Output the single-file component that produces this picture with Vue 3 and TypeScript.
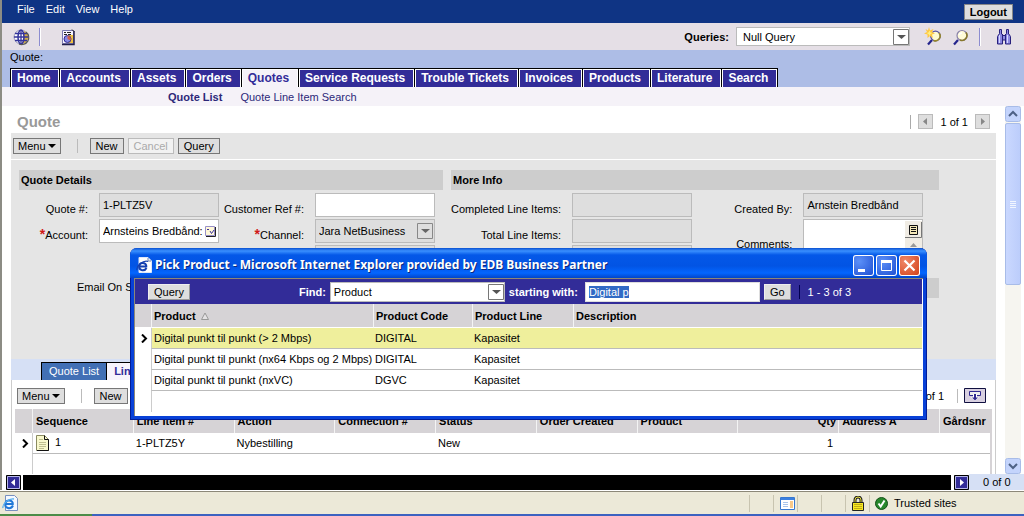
<script setup lang="ts">
import { onMounted, ref } from 'vue'

interface LineItem {
  sequence: string
  item: string
  action: string
  status: string
  qty: string
}

interface Product {
  name: string
  code: string
  line: string
}

const menus: string[] = ['File', 'Edit', 'View', 'Help']
const screens: string[] = [
  'Home', 'Accounts', 'Assets', 'Orders', 'Quotes', 'Service Requests',
  'Trouble Tickets', 'Invoices', 'Products', 'Literature', 'Search',
]
const activeScreen = ref('Quotes')

const products: Product[] = [
  { name: 'Digital punkt til punkt (> 2 Mbps)', code: 'DIGITAL', line: 'Kapasitet' },
  { name: 'Digital punkt til punkt (nx64 Kbps og 2 Mbps)', code: 'DIGITAL', line: 'Kapasitet' },
  { name: 'Digital punkt til punkt (nxVC)', code: 'DGVC', line: 'Kapasitet' },
]
const picked = ref(0)

const lineItems: LineItem[] = [
  { sequence: '1', item: '1-PLTZ5Y', action: 'Nybestilling', status: 'New', qty: '1' },
]

const term = ref('Digital p')
const termBox = ref<HTMLInputElement | null>(null)

onMounted(() => {
  termBox.value?.focus()
  termBox.value?.select()
})
</script>

<template>
  <div class="app">
    <div class="window">
      <header class="menubar">
        <nav class="menus">
          <a v-for="m in menus" :key="m" href="#">{{ m }}</a>
        </nav>
        <button class="logout" type="button">Logout</button>
      </header>

      <div class="toolbar">
        <button class="icon" type="button" aria-label="Site map">
          <svg width="18" height="18" viewBox="0 0 18 18">
            <circle cx="9" cy="9" r="7" fill="#fff" stroke="#9a98b8" />
            <path d="M12 3a7 7 0 0 1 1 12l-4 1 2-3z" fill="#d8b040" />
            <ellipse cx="9" cy="9" rx="3" ry="7" fill="none" stroke="#34349c" stroke-width="1.5" />
            <path d="M9 2v14M2 9h14M3 5.5h12M3 12.500h12" stroke="#34349c" stroke-width="1.300" />
            <path d="M14 4a7 7 0 0 1-7 12" fill="none" stroke="#555" stroke-width="1.200" />
          </svg>
        </button>
        <span class="bar"></span>
        <button class="icon report" type="button" aria-label="Reports">
          <svg width="16" height="18" viewBox="0 0 16 18">
            <path d="M2.500 2.500h11v13h-11z" fill="#f8f4ff" stroke="#7a78b0" />
            <path d="M9 7h4v8H8z" fill="#f0c040" />
            <path d="M14 3v13.500H2" fill="none" stroke="#24204c" stroke-width="1.500" />
            <path d="M4 4.500h2M7 4.500h4M4 6.500h3M8 6.500h3" stroke="#222" />
            <path d="M12 1.500l2 2" stroke="#222" />
            <circle cx="7.500" cy="11" r="3.500" fill="#8888e4" stroke="#2c2890" />
            <path d="M7.500 11V7.500a3.500 3.500 0 0 1 3 5z" fill="#d06048" />
          </svg>
        </button>
        <label class="queries" for="query">Queries:</label>
        <span class="pick query-pick">
          <select id="query"><option>Null Query</option></select>
          <svg class="arrow" width="16" height="16" viewBox="0 0 16 16"><path d="M.5.5h15v15H.5z" fill="#fff" stroke="#777" /><path d="M4 6h9l-4.500 4z" fill="#555" /></svg>
        </span>
        <button class="icon" type="button" aria-label="New query">
          <svg width="20" height="20" viewBox="0 0 20 20">
            <path d="M4 17.500l4-4.500" stroke="#24248c" stroke-width="2.200" />
            <circle cx="11.500" cy="9" r="4.800" fill="#fffbd0" stroke="#5850a0" stroke-width="1.300" />
            <path d="M15 6a4.800 4.800 0 0 1-5.500 7.500" fill="none" stroke="#98882c" stroke-width="1.600" />
            <path d="M5 0l1 3.500L9.500 2 8 5l3 1.500-3 1L9 11 6 9l-2.500 2 0-3.500L0 6.500 3 5 1.500 2 4 3.500z" fill="#ffc840" />
            <path d="M5.500 3.500l1 2 2 .5-2 1-1 2-1-2-2-1 2-.5z" fill="#fff080" />
          </svg>
        </button>
        <button class="icon" type="button" aria-label="Execute query">
          <svg width="20" height="20" viewBox="0 0 20 20">
            <path d="M3 17.500l4-4.500" stroke="#24248c" stroke-width="2.200" />
            <circle cx="11" cy="8.500" r="5" fill="#fffbd8" stroke="#8880a8" stroke-width="1.200" />
            <path d="M15 5.500a5 5 0 0 1-6 7.500" fill="none" stroke="#88782c" stroke-width="1.600" />
            <path d="M8 8a3 3 0 0 1 3-2" fill="none" stroke="#fff" stroke-width="1.500" />
          </svg>
        </button>
        <span class="bar right"></span>
        <button class="icon" type="button" aria-label="Search center">
          <svg width="16" height="18" viewBox="0 0 16 18">
            <path d="M3.500 1.500h2v4l1.500 2h2l1.500-2v-4h2v4l2 3v7.500h-5v-4h-3v4h-5V8.500l2-3z" fill="#8c88e0" stroke="#28207c" />
            <path d="M3.500 7v8M11.500 7v8" stroke="#d8d8ff" />
            <path d="M6.500 6v10M9.500 6v10M5.500 2v4M12.500 2v4" stroke="#28207c" />
          </svg>
        </button>
      </div>

      <div class="screenbar">
        <div class="crumb">Quote:</div>
        <nav class="screens">
          <a v-for="s in screens" :key="s" href="#" :class="{ active: s === activeScreen }" @click.prevent="activeScreen = s">{{ s }}</a>
        </nav>
      </div>

      <nav class="views">
        <a class="current" href="#">Quote List</a>
        <a href="#">Quote Line Item Search</a>
      </nav>

      <div class="workspace">
        <main class="page">
          <div class="titlebar">
            <h1>Quote</h1>
            <div class="pager">
              <span class="rule"></span>
              <button type="button" class="step" aria-label="Previous record"><svg width="15" height="15" viewBox="0 0 15 15"><path d="M9 4v7L5 7.500z" fill="#888" /></svg></button>
              <span>1 of 1</span>
              <button type="button" class="step" aria-label="Next record"><svg width="15" height="15" viewBox="0 0 15 15"><path d="M6 4v7l4-3.500z" fill="#888" /></svg></button>
            </div>
          </div>

          <div class="actions">
            <button class="btn menu" type="button">Menu <svg width="8" height="4" viewBox="0 0 8 4"><path d="M0 0h8L4 4z" /></svg></button>
            <span class="rule"></span>
            <button class="btn" type="button">New</button>
            <button class="btn" type="button" disabled>Cancel</button>
            <button class="btn" type="button">Query</button>
          </div>

          <form class="form" @submit.prevent>
            <section class="details">
              <h2>Quote Details</h2>
              <div class="fields">
                <label for="quote-no">Quote #:</label>
                <input id="quote-no" readonly value="1-PLTZ5V">
                <label for="customer-ref">Customer Ref #:</label>
                <input id="customer-ref" value="">
                <label for="account"><b>*</b>Account:</label>
                <span class="pick">
                  <input id="account" value="Arnsteins Bredbånd:">
                  <svg class="chooser" width="11" height="11" viewBox="0 0 11 11"><path d="M.5.5h9v9h-9z" fill="#fff8d8" stroke="#9890c8" /><path d="M10.500 1v9.500H1" fill="none" stroke="#222" /><path d="M2 3.500h2M5 5l1.500 2.500L9 4" fill="none" stroke="#38309c" /></svg>
                </span>
                <label for="channel"><b>*</b>Channel:</label>
                <span class="pick dim">
                  <select id="channel"><option>Jara NetBusiness</option></select>
                  <svg class="arrow" width="16" height="16" viewBox="0 0 16 16"><path d="M.5.5h15v15H.5z" fill="#dedede" stroke="#888" /><path d="M4 6h9l-4.500 4z" fill="#666" /></svg>
                </span>
                <input class="third" readonly aria-label="Channel reference" value="">
                <label class="email" for="email-status">Email On Status:</label>
                <input id="email-status" type="checkbox">
              </div>
            </section>
            <section class="more">
              <h2>More Info</h2>
              <div class="fields">
                <label for="completed">Completed Line Items:</label>
                <input id="completed" readonly value="">
                <label for="created-by">Created By:</label>
                <input id="created-by" readonly value="Arnstein Bredbånd">
                <label for="total">Total Line Items:</label>
                <input id="total" readonly value="">
                <label class="tall" for="comments">Comments:</label>
                <span class="pick tall">
                  <textarea id="comments"></textarea>
                  <svg class="memo" width="17" height="34" viewBox="0 0 17 34">
                    <path d="M0 0h17v34H0z" fill="#f0ece4" /><path d="M16.500 1v15.500H0" fill="none" stroke="#777" />
                    <path d="M4.500 4.500h8v9h-8z" fill="#f5e8b8" stroke="#111" /><path d="M6 6.500h5M6 8.500h5M6 10.500h5" stroke="#111" />
                    <path d="M5 26l3.500-4 3.500 4z" fill="#999" />
                  </svg>
                </span>
                <input class="second" readonly aria-label="Open line items" value="">
              </div>
              <h2 class="lower"></h2>
            </section>
          </form>

          <nav class="subtabs">
            <a class="on" href="#">Quote List</a>
            <a href="#">Line Items</a>
          </nav>

          <div class="list">
            <div class="actions list-actions">
              <button class="btn menu" type="button">Menu <svg width="8" height="4" viewBox="0 0 8 4"><path d="M0 0h8L4 4z" /></svg></button>
              <span class="rule"></span>
              <button class="btn" type="button">New</button>
              <span class="count">1 - 1 of 1</span>
              <span class="rule"></span>
              <button class="toggle" type="button" aria-label="Show more">
                <svg width="22" height="15" viewBox="0 0 22 15"><path d="M.5.5h21v14H.5z" fill="#d8d0e0" stroke="#101040" /><path d="M5.500 3.500h11v4h-11z" fill="#eee" stroke="#302890" /><path d="M9 6h4v3h2l-4 4-4-4h2z" fill="#fff" /><path d="M8 9.500h6l-3 3z" fill="#302890" /><path d="M11 6v4" stroke="#302890" stroke-width="2" /></svg>
              </button>
            </div>
            <table class="items">
              <colgroup>
                <col class="c-mark"><col v-for="n in 9" :key="n" class="c-wide"><col class="c-last">
              </colgroup>
              <thead>
                <tr>
                  <th></th><th>Sequence</th><th>Line Item #</th><th>Action</th><th>Connection #</th><th>Status</th>
                  <th>Order Created</th><th>Product</th><th class="num">Qty</th><th>Address A</th><th>Gårdsnr</th>
                </tr>
              </thead>
              <tbody>
                <tr v-for="row in lineItems" :key="row.item">
                  <td class="mark"><svg width="7" height="9" viewBox="0 0 7 9"><path d="M1 .5l4 4-4 4" fill="none" stroke="#000" stroke-width="2" /></svg></td>
                  <td class="seq">
                    <svg width="13" height="16" viewBox="0 0 13 16"><path d="M.5.5h8l4 4v11H.5z" fill="#f8f8cc" stroke="#8a8a60" /><path d="M8.500.5v4h4v11H1" fill="none" stroke="#111" /><path d="M3 4.500h4M3 7.500h7M3 9.500h7M3 11.500h7M3 13.500h5" stroke="#c0c090" /></svg>
                    <span>{{ row.sequence }}</span>
                  </td>
                  <td>{{ row.item }}</td><td>{{ row.action }}</td><td></td><td>{{ row.status }}</td>
                  <td></td><td></td><td class="num">{{ row.qty }}</td><td></td><td></td>
                </tr>
                <tr><td v-for="n in 11" :key="n"></td></tr>
              </tbody>
            </table>
          </div>
        </main>

        <div class="scroller">
          <svg width="16" height="16" viewBox="0 0 16 16"><rect x=".5" y=".5" width="15" height="15" rx="2" fill="#c4d4fc" stroke="#a8bce8" /><path d="M4 10l4-4 4 4" fill="none" stroke="#4d6185" stroke-width="2" /></svg>
          <div class="thumb"><i></i><i></i><i></i><i></i></div>
          <svg width="16" height="16" viewBox="0 0 16 16"><rect x=".5" y=".5" width="15" height="15" rx="2" fill="#c4d4fc" stroke="#a8bce8" /><path d="M4 6l4 4 4-4" fill="none" stroke="#4d6185" stroke-width="2" /></svg>
        </div>
      </div>

      <div class="hscroll">
        <button type="button" aria-label="Scroll left"><svg width="15" height="15" viewBox="0 0 15 15"><path d="M.5.5h14v14H.5z" fill="#322c98" stroke="#000" /><path d="M1.500 1.500h12v12h-12z" fill="none" stroke="#b8b8e8" /><path d="M9 4v7L5 7.500z" fill="#fff" /></svg></button>
        <div class="track"></div>
        <button type="button" aria-label="Scroll right"><svg width="15" height="15" viewBox="0 0 15 15"><path d="M.5.5h14v14H.5z" fill="#322c98" stroke="#000" /><path d="M1.500 1.500h12v12h-12z" fill="none" stroke="#b8b8e8" /><path d="M6 4v7l4-3.500z" fill="#fff" /></svg></button>
        <span class="total">0 of 0</span>
      </div>
    </div>

    <footer class="status">
      <div class="page-icon">
        <svg width="16" height="16" viewBox="0 0 16 16"><path d="M3.500.5h9l3 3v12h-12z" fill="#f4f8ff" stroke="#7890c0" /><path d="M11 10.500c-1 2-3 3-5 2.500-4-1-3.500-7 .5-7.500 3-.3 4.500 1.500 4.300 3.500H4" fill="none" stroke="#2078d8" stroke-width="2" /><path d="M1 13C0 9 7 3 12 4" fill="none" stroke="#58b0f0" stroke-width="1.300" /></svg>
      </div>
      <div class="cell"></div>
      <div class="cell"><svg width="15" height="13" viewBox="0 0 15 13"><path d="M.5.5h14v12H.5z" fill="#fff" stroke="#3878d0" /><path d="M1 1h13v2H1z" fill="#3c80e0" /><path d="M3 5.500h5M3 7.500h5M3 9.500h5" stroke="#a8c4ec" /><path d="M10 4h3v7h-3z" fill="#f8c888" /></svg></div>
      <div class="cell"></div>
      <div class="cell"></div>
      <div class="cell"><svg width="12" height="15" viewBox="0 0 12 15"><path d="M3 7V4a3 3 0 0 1 6 0v3" fill="none" stroke="#222" stroke-width="3" /><path d="M3 7V4a3 3 0 0 1 6 0v3" fill="none" stroke="#e8e040" /><path d="M.5 6.500h11v8H.5z" fill="#f8e820" stroke="#222" /><path d="M2 8.500h8M2 10.500h8M2 12.500h8" stroke="#c0ac18" /></svg></div>
      <div class="cell zone">
        <svg width="13" height="13" viewBox="0 0 13 13"><circle cx="6.500" cy="6.500" r="6" fill="#28882c" stroke="#145018" /><path d="M3.500 6.500l2.200 3L9.500 3.500" fill="none" stroke="#fff" stroke-width="2" /></svg>
        <span>Trusted sites</span>
      </div>
    </footer>
    <div class="taskbar"></div>

    <div class="popup" role="dialog" aria-labelledby="popup-title">
      <div class="caption">
        <svg width="16" height="16" viewBox="0 0 16 16"><path d="M3 .5h9l3.500 3.500v11.500H3z" fill="#fff" stroke="#e0e8f8" /><path d="M12 1v3h3" fill="none" stroke="#6880b0" /><path d="M10.500 11c-1 2-3 2.500-5 2-3.500-1-3-7 1-7 2.500 0 4 1.500 3.800 3.500H4" fill="none" stroke="#1440b0" stroke-width="2" /><path d="M1 13C0 9 7 3 12 4.500" fill="none" stroke="#1440b0" stroke-width="1.200" /></svg>
        <span id="popup-title">Pick Product - Microsoft Internet Explorer provided by EDB Business Partner</span>
        <button type="button" aria-label="Minimize"><svg width="21" height="21" viewBox="0 0 21 21"><path d="M5 14h7v3H5z" fill="#fff" /></svg></button>
        <button type="button" aria-label="Maximize"><svg width="21" height="21" viewBox="0 0 21 21"><path d="M5.500 5.500h10v10h-10z" fill="none" stroke="#fff" /><path d="M5 5h11v3H5z" fill="#fff" /></svg></button>
        <button class="close" type="button" aria-label="Close"><svg width="21" height="21" viewBox="0 0 21 21"><path d="M5.500 5.500l10 10M15.500 5.500l-10 10" stroke="#fff" stroke-width="2.200" /></svg></button>
      </div>
      <div class="body">
        <div class="finder">
          <button class="btn" type="button">Query</button>
          <label class="find" for="find">Find:</label>
          <span class="pick find-pick">
            <select id="find"><option>Product</option></select>
            <svg class="arrow" width="16" height="16" viewBox="0 0 16 16"><path d="M.5.5h15v15H.5z" fill="#fff" stroke="#777" /><path d="M4 6h9l-4.500 4z" fill="#555" /></svg>
          </span>
          <label for="term">starting with:</label>
          <input id="term" ref="termBox" v-model="term">
          <button class="btn go" type="button">Go</button>
          <span class="rule"></span>
          <span class="range">1 - 3 of 3</span>
        </div>
        <table class="results">
          <colgroup><col class="p-mark"><col class="p-name"><col class="p-code"><col class="p-line"><col></colgroup>
          <thead>
            <tr>
              <th></th>
              <th>Product <svg width="8" height="8" viewBox="0 0 8 8"><path d="M.5 7.500L4 1l3.500 6.500z" fill="#e4e2e4" stroke="#999" /></svg></th>
              <th>Product Code</th><th>Product Line</th><th>Description</th>
            </tr>
          </thead>
          <tbody>
            <tr v-for="(p, i) in products" :key="p.name" :class="{ picked: i === picked }" @click="picked = i">
              <td class="mark"><svg v-if="i === picked" width="7" height="9" viewBox="0 0 7 9"><path d="M1 .5l4 4-4 4" fill="none" stroke="#000" stroke-width="2" /></svg></td>
              <td>{{ p.name }}</td><td>{{ p.code }}</td><td>{{ p.line }}</td><td></td>
            </tr>
            <tr class="blank"><td v-for="n in 5" :key="n"></td></tr>
          </tbody>
        </table>
      </div>
    </div>
  </div>
</template>

<style>
html, body { margin: 0; background: #fff; overflow: hidden; }
</style>

<style scoped>
* { box-sizing: border-box; }
.app {
  position: relative;
  height: 100vh;
  display: flex;
  flex-direction: column;
  overflow: hidden;
  font-family: "Liberation Sans", Arial, sans-serif;
  font-size: 11px;
  line-height: 14px;
  color: #000;
}
button, input, select, textarea { font: inherit; color: inherit; margin: 0; border-radius: 0; }
button { padding: 0; border: 0; background: none; }
a { color: inherit; text-decoration: none; white-space: nowrap; }
svg { display: block; flex: none; }
.window { flex: 1; min-height: 0; display: flex; flex-direction: column; border-left: 2px solid #8c8c84; }

.menubar { height: 23px; flex: none; background: #0f3484; color: #fff; display: flex; justify-content: space-between; align-items: center; padding: 0 10px 0 15px; }
.menus { display: flex; gap: 11px; padding-bottom: 5px; }
.logout { height: 16px; margin-right: 1px; padding: 0 5px; background: #dedede; border: 1px solid #888; color: #000; font-weight: bold; line-height: 14px; }

.toolbar { height: 27px; flex: none; background: #e5dfe6; display: flex; align-items: center; padding: 0 12px 0 10px; }
.bar { width: 2px; height: 18px; margin-left: 9px; background: #8c8cd0; border-right: 1px solid #fff; }
.bar.right { margin: 0 15px 0 8px; }
.report { margin-left: 19px; }
.queries { margin-left: auto; font-weight: bold; }
.query-pick { width: 174px; height: 19px; margin: 0 14px 0 7px; }
.icon + .icon { margin-left: 7px; }

.pick { position: relative; display: flex; min-width: 0; }
.pick > select, .pick > input, .pick > textarea { width: 100%; height: 100%; }
select { appearance: none; background: #fff; border: 1px solid #bbb; padding: 0 20px 0 6px; }
.arrow { position: absolute; right: 1px; top: 50%; margin-top: -8px; pointer-events: none; }

.screenbar { height: 37px; flex: none; background: #adbde6; display: flex; flex-direction: column; justify-content: space-between; padding-left: 8px; }
.crumb { line-height: 15px; }
.screens { display: flex; }
.screens a { height: 19px; padding: 0 9px 0 6px; border-top: 1px solid #000; border-left: 1px solid #000; background: #322c98; color: #fff; font-weight: bold; font-size: 12px; line-height: 18px; box-shadow: inset 1px 1px #fff, inset -1px 0 #fff; }
.screens a:last-child { border-right: 1px solid #000; }
.screens a.active { background: #f5f2f8; color: #322c98; }

.views { height: 19px; flex: none; background: #f5f2f8; display: flex; align-items: center; gap: 18px; padding-left: 166px; color: #2c2878; }
.current { font-weight: bold; }

.workspace { flex: 1; min-height: 0; display: flex; }
.page { flex: 1; min-width: 0; margin-left: 9px; display: flex; flex-direction: column; overflow: hidden; }
.titlebar { height: 27px; flex: none; display: flex; align-items: center; justify-content: space-between; padding: 4px 6px 0 6px; }
h1 { margin: 0; font-size: 15px; line-height: 18px; color: #999; }
.pager { display: flex; align-items: center; gap: 7px; }
.rule { width: 1px; height: 14px; background: #aaa; flex: none; }
.step { width: 15px; height: 15px; background: #dedede; outline: 1px solid #bbb; outline-offset: -1px; }
.actions { height: 27px; flex: none; display: flex; align-items: center; gap: 4px; padding-left: 2px; background: #e5e5e5; border-bottom: 1px solid #fff; }
.actions .rule { margin: 0 8px 0 12px; background: #bbb; }
.btn { height: 16px; padding: 0 5px; display: flex; align-items: center; gap: 2px; background: #dedede; border: 1px solid #777; white-space: nowrap; }
.btn.menu { padding: 0 4px; }
.btn:disabled { color: #aaa; border-color: #bbb; background: #f2f2f2; }

.form { height: 199px; flex: none; display: grid; grid-template-columns: minmax(0, 424fr) minmax(0, 488fr); column-gap: 8px; padding: 10px 57px 0 8px; background: #e5e5e5; overflow: hidden; }
h2 { height: 20px; margin: 0 0 3px; padding-left: 2px; background: #cdcdcd; font-size: 11px; line-height: 20px; }
h2.lower { margin-top: 9px; }
.fields { display: grid; grid-auto-rows: 24px; row-gap: 2px; }
.details .fields { grid-template-columns: 80fr 120fr 96fr 120fr 8fr; }
.more .fields { grid-template-columns: 120fr 120fr 112fr 120fr 16fr; }
.fields label { padding: 9px 11px 0 0; text-align: right; white-space: nowrap; }
.details label:nth-of-type(odd), .more label:nth-of-type(odd) { grid-column: 1; }
.fields input, .fields textarea { min-width: 0; width: 100%; padding: 0 3px; border: 1px solid #bbb; background: #fff; outline: 0; resize: none; }
.fields input[readonly] { background: #dedede; }
.fields b { color: #d01818; font-size: 14px; line-height: 8px; }
.dim select { background: #dedede; padding-left: 3px; }
.dim .arrow { right: 2px; }
.chooser { position: absolute; right: 3px; top: 7px; }
.third { grid-column: 4; grid-row: 3; }
.details label.email { grid-column: 1 / 3; grid-row: 4; text-align: left; padding-left: 58px; }
#email-status { grid-column: 4; grid-row: 4; width: 13px; height: 13px; }
.tall { grid-row: 2 / 4; }
.more label.tall { grid-column: 3; padding-top: 18px; }
.pick.tall { grid-column: 4; }
.second { grid-column: 2; grid-row: 3; }
.memo { position: absolute; right: 1px; top: 2px; }

.subtabs { height: 21px; flex: none; display: flex; align-items: flex-end; padding-left: 30px; background: #d6e0f5; }
.subtabs a { height: 18px; padding: 0 7px; border-top: 1px solid #000; border-left: 1px solid #000; line-height: 17px; background: #f7f4fc; color: #322c98; font-weight: bold; }
.subtabs a.on { padding: 0 7px 0 7px; background: #4270b5; color: #fff; font-weight: normal; }

.list { flex: 1; min-height: 0; border-left: 1px solid #ccc; border-right: 1px solid #ccc; padding: 2px 3px 0; }
.list-actions { background: #fff; border: 0; }
.count { margin-left: auto; }
.list-actions .count + .rule { margin: 0 2px 0 9px; }
.toggle { margin-right: 6px; }
table { width: 100%; border-collapse: separate; border-spacing: 0; table-layout: fixed; }
th, td { padding: 0 2px 0 3px; text-align: left; white-space: nowrap; overflow: hidden; }
th { height: 24px; background: #d6d3d6; border-left: 1px solid #f4f4f4; }
td { height: 21px; border-bottom: 1px solid #bbb; }
th:first-child { border-left: 0; }
td:first-child { border-bottom: 0; }
td:nth-child(2) { border-left: 1px solid #ccc; }
td.mark { padding: 0 0 0 7px; }
th.num, td.num { text-align: right; }
td.num { padding-right: 5px; }
.items { border-right: 2px solid #d6d3d6; }
.c-mark { width: 17px; }
.c-last { width: 51px; }
.seq svg { display: inline-block; vertical-align: middle; margin-right: 6px; }

.scroller { width: 16px; flex: none; margin: 0 3px 0 9px; display: flex; flex-direction: column; background: #f6f5f0; }
.scroller > svg:last-child { margin-top: auto; }
.thumb { height: 162px; margin-top: 1px; display: flex; flex-direction: column; align-items: center; justify-content: center; gap: 1px; border: 1px solid #a8bce8; border-radius: 2px; background: linear-gradient(90deg, #cad8ff, #bccdfb); }
.thumb i { width: 6px; height: 1px; background: #f2f6ff; }

.hscroll { height: 16px; flex: none; display: flex; align-items: center; padding-left: 4px; }
.track { flex: 1; height: 15px; margin: 0 3px 0 2px; background: #000; }
.total { width: 55px; height: 16px; padding-left: 14px; line-height: 16px; background: #d6e0f5; }

.status { height: 23px; flex: none; display: flex; align-items: center; margin-top: 1px; border-top: 1px solid #8c8878; background: #ece9d8; }
.page-icon { flex: 1; padding-left: 2px; }
.cell { width: 24px; height: 17px; display: flex; align-items: center; padding-left: 6px; border-left: 1px solid #c8c4b0; }
.zone { width: 155px; gap: 6px; padding-left: 5px; }
.taskbar { height: 2px; flex: none; background: linear-gradient(90deg, #4c8c48 0 92px, #3c62c0 92px); }

.popup { position: absolute; left: 130px; right: 97px; top: 248px; border-radius: 7px 7px 0 0; padding: 0 4px 4px; background: #0841d8; box-shadow: inset 1px -1px #001c98, inset -1px 0 #001c98; }
.caption { height: 30px; margin: 0 -4px; padding: 4px 7px 0 6px; display: flex; align-items: center; gap: 2px; border-radius: 7px 7px 0 0; background: linear-gradient(#0a50d0, #3a90ff 3px, #0458e8 7px, #0254e4 18px, #0366ff 25px, #0244c8); color: #fff; }
.caption span { flex: 1; min-width: 0; padding-left: 1px; font-family: "Noto Sans", "Open Sans", sans-serif; font-size: 12px; font-weight: bold; line-height: 16px; white-space: nowrap; text-shadow: 1px 1px #0a2a80; }
.caption button { width: 21px; height: 21px; border-radius: 3px; background: radial-gradient(circle at 30% 30%, #5c90f8, #1c4cd0); box-shadow: inset 0 0 0 1px #fff; }
.caption .close { background: radial-gradient(circle at 30% 30%, #f08868, #d03c14); }
.body { padding: 0 1px 4px 0; background: #fff; border-top: 1px solid #8c8878; border-left: 1px solid #8c8878; }
.finder { height: 25px; display: flex; align-items: center; padding: 0 0 0 13px; background: #322c98; color: #fff; font-weight: bold; }
.finder .btn { color: #000; font-weight: normal; border-color: #eee #999 #999 #eee; }
.find { margin-left: 109px; }
.find-pick { width: 175px; height: 20px; margin: 0 4px; }
.find-pick select { padding-left: 3px; color: #000; font-weight: normal; }
#term { width: 175px; height: 20px; margin: 0 4px 0 7px; padding: 0 3px; border: 1px solid #ddd; background: #fff; outline: 0; color: #000; font-weight: normal; }
#term::selection { background: #316ac5; color: #fff; }
.finder .rule { margin: 0 8px; background: #000050; }
.range { font-weight: normal; }
.results th, .results td { padding: 0 0 0 2px; }
.results td.mark { padding-left: 6px; }
.results th svg { display: inline-block; margin-left: 2px; }
.results th { border-bottom: 1px solid #fff; }
.results .picked td:not(:first-child) { background: #efef9c; }
.results .blank td { border-bottom: 0; }
.p-mark { width: 16px; }
.p-name { width: 222px; }
.p-code { width: 99px; }
.p-line { width: 101px; }
</style>
